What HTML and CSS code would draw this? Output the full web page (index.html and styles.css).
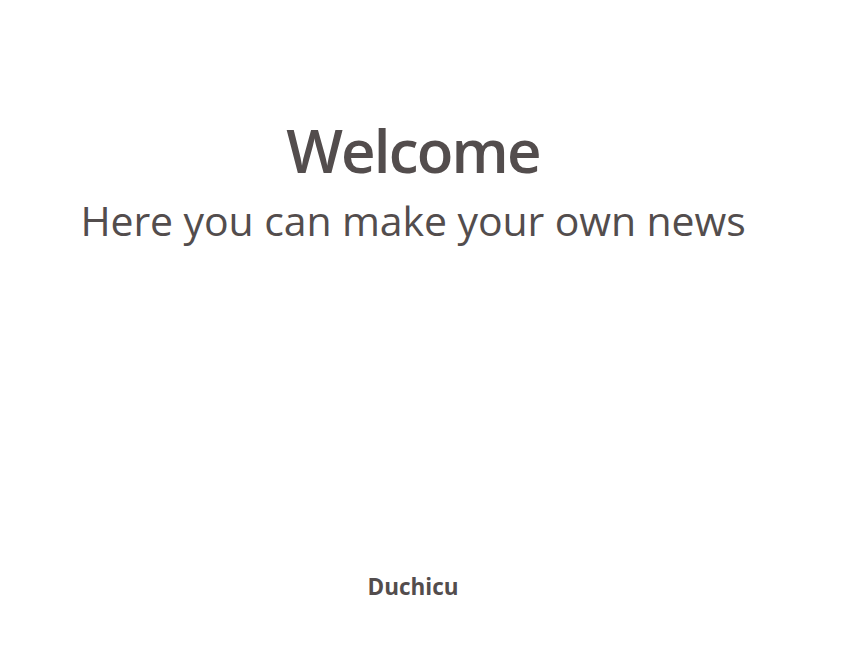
FILE: index.html
```html
<!DOCTYPE html>
<html lang="en">
<head>
<meta charset="utf-8">
<title>Welcome</title>
<link rel="stylesheet" href="styles.css">
</head>
<body>
<div class="page">
  <header class="hero">
    <h1 class="hero-title">Welcome</h1>
    <h2 class="hero-sub">Here you can make your own news</h2>
  </header>
  <footer class="footer">
    <p class="footer-name">Duchicu</p>
  </footer>
</div>
</body>
</html>
```
FILE: styles.css
```css
html, body {
  margin: 0;
  padding: 0;
  background: #ffffff;
}
body {
  font-family: "Open Sans", "Noto Sans", sans-serif;
  color: #534d4d;
}
.page {
  width: 826px;
  height: 645px;
  display: flex;
  flex-direction: column;
  align-items: center;
}
.hero {
  display: flex;
  flex-direction: column;
  align-items: center;
  padding-top: 110px;
}
.hero-title {
  margin: 0;
  font-size: 60px;
  line-height: 80px;
  font-weight: 600;
  letter-spacing: -1.8px;
}
.hero-sub {
  margin: 0;
  font-size: 41px;
  line-height: 60px;
  font-weight: 500;
  letter-spacing: -0.1px;
}
.footer {
  margin-top: auto;
  padding-bottom: 43px;
}
.footer-name {
  margin: 0;
  font-size: 22.5px;
  line-height: 30px;
  font-weight: 700;
}
```
